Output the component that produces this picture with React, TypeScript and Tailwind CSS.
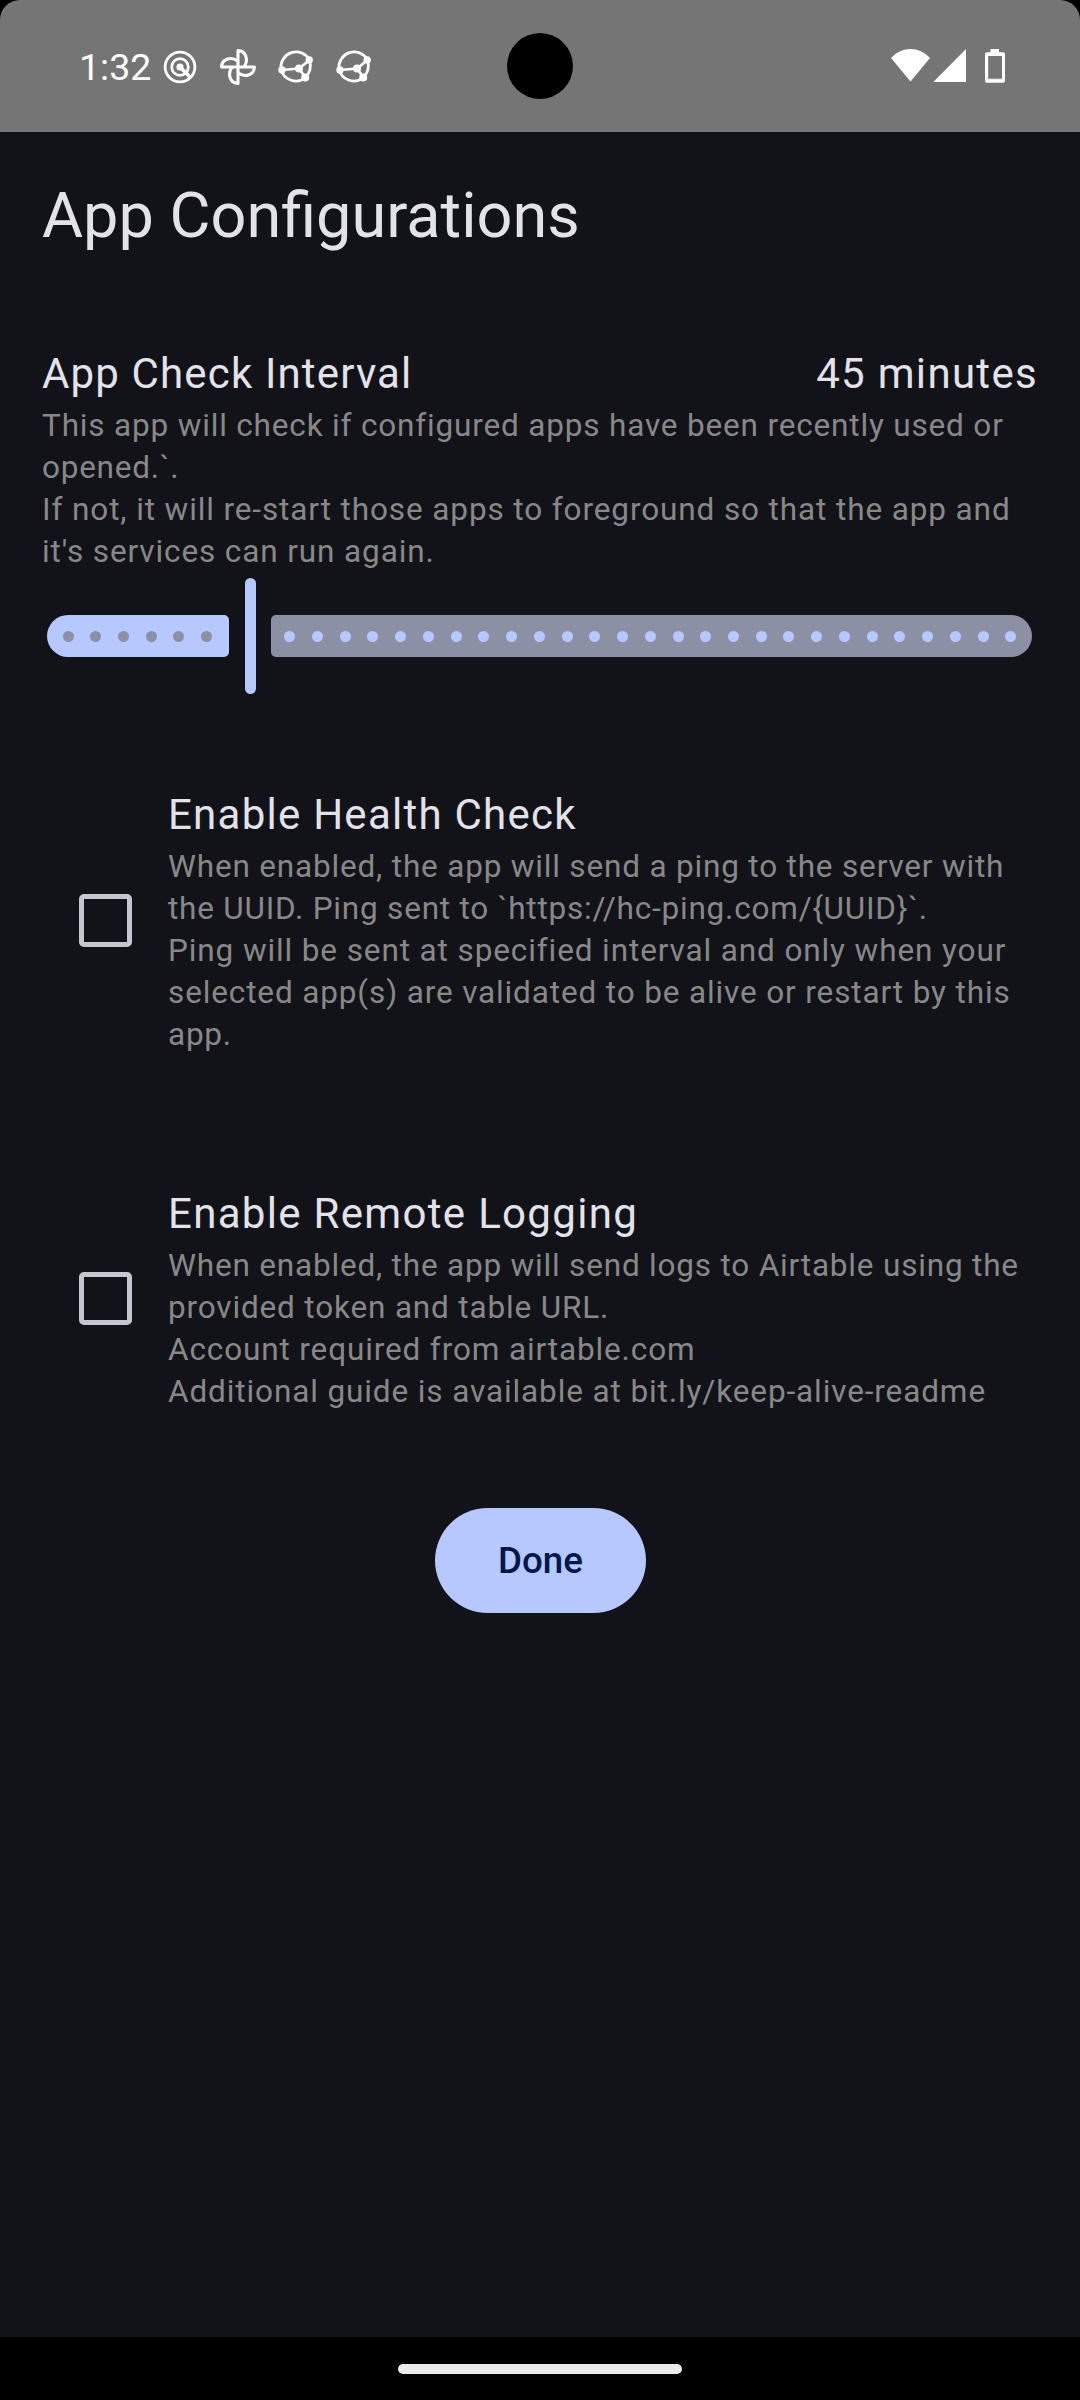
import React from "react";

const ACTIVE_TICKS = Array.from({ length: 6 });
const INACTIVE_TICKS = Array.from({ length: 27 });

type Line = { text: string; tracking: string };

const INTERVAL_LINES: Line[] = [
  { text: "This app will check if configured apps have been recently used or", tracking: "tracking-[0.83px]" },
  { text: "opened.`.", tracking: "tracking-[0.75px]" },
  { text: "If not, it will re-start those apps to foreground so that the app and", tracking: "tracking-[0.89px]" },
  { text: "it's services can run again.", tracking: "tracking-[0.89px]" },
];

const HEALTH_LINES: Line[] = [
  { text: "When enabled, the app will send a ping to the server with", tracking: "tracking-[0.82px]" },
  { text: "the UUID. Ping sent to `https://hc-ping.com/{UUID}`.", tracking: "tracking-[0.79px]" },
  { text: "Ping will be sent at specified interval and only when your", tracking: "tracking-[0.89px]" },
  { text: "selected app(s) are validated to be alive or restart by this", tracking: "tracking-[0.87px]" },
  { text: "app.", tracking: "tracking-[0.75px]" },
];

const LOGGING_LINES: Line[] = [
  { text: "When enabled, the app will send logs to Airtable using the", tracking: "tracking-[0.81px]" },
  { text: "provided token and table URL.", tracking: "tracking-[0.84px]" },
  { text: "Account required from airtable.com", tracking: "tracking-[0.87px]" },
  { text: "Additional guide is available at bit.ly/keep-alive-readme", tracking: "tracking-[0.89px]" },
];

function TargetIcon() {
  return (
    <svg className="h-9 w-9" viewBox="-18 -18 36 36" fill="none" stroke="white">
      <circle r="14.9" strokeWidth="2.8" />
      <circle r="8.3" strokeWidth="2.8" />
      <circle r="3.6" fill="white" stroke="none" />
      <path d="M0 0 L10 10" strokeWidth="3.6" />
    </svg>
  );
}

function PinwheelIcon() {
  return (
    <svg className="h-10 w-10" viewBox="-20 -20 40 40" fill="none" stroke="white" strokeWidth="3.1" strokeLinejoin="round">
      <path d="M0 0 V-16.4 C8.4 -16.2 10.8 -6.5 5.8 0" />
      <path d="M0 0 H16.4 C16.2 8.4 6.5 10.8 0 5.8" />
      <path d="M0 0 V16.4 C-8.4 16.2 -10.8 6.5 -5.8 0" />
      <path d="M0 0 H-16.4 C-16.2 -8.4 -6.5 -10.8 0 -5.8" />
    </svg>
  );
}

function NetworkIcon() {
  return (
    <svg className="h-10 w-10" viewBox="-20 -19.5 40 40" fill="none" stroke="white" strokeWidth="2.7">
      <path d="M13.5 -6.5 A15.2 15.2 0 0 0 -15 2.5 A15.2 15.2 0 0 0 9 11.5" />
      <path d="M13.5 -6 C15.5 0 14 6 9.5 11" />
      <path d="M-14 3.5 L3 2 L13 -6 M3 2 L9.5 11" />
      <g fill="white" stroke="none">
        <circle cx="-14" cy="3.5" r="3.7" />
        <circle cx="3" cy="2" r="4" />
        <circle cx="13.2" cy="-6.5" r="3.7" />
        <circle cx="9.2" cy="11" r="4" />
      </g>
    </svg>
  );
}

function StatusBar() {
  return (
    <div className="h-[132px] shrink-0 bg-black">
      <div className="relative flex h-full items-center rounded-t-[20px] bg-[#757575] pl-[79px] pr-[75px]">
        <span className="w-[83px] pt-px text-[37.5px] leading-[44px] text-white">1:32</span>
        <div className="flex items-center pt-0.5">
          <TargetIcon />
          <div className="ml-5 flex gap-[18px]">
            <PinwheelIcon />
            <NetworkIcon />
            <NetworkIcon />
          </div>
        </div>
        <div className="absolute left-[507px] top-[33px] h-[66px] w-[66px] rounded-full bg-black" />
        <svg className="ml-auto h-[36px] w-[115px]" viewBox="890 48 115 36" fill="white">
          <path d="M891 58 C902 46 919 46 930 58 L910.5 81.5 Z" />
          <path d="M966 49 V82 H933.3 Z" />
          <path fillRule="evenodd" d="M990.5 49 H999 V52.2 H1003 Q1005 52.2 1005 54.5 V80.5 Q1005 82.8 1003 82.8 H987 Q985 82.8 985 80.5 V54.5 Q985 52.2 987 52.2 H990.5 Z M988.2 56 V79 H1002 V56 Z" />
          <path d="M988.2 78.6 H1002 V79.4 H988.2 Z" fill="#f3c8bd" />
        </svg>
      </div>
    </div>
  );
}

function Heading({ children, tracking = "tracking-[1.3125px]" }: { children: React.ReactNode; tracking?: string }) {
  return <h2 className={`whitespace-nowrap text-[42px] leading-[63px] text-[#e3e2e9] ${tracking}`}>{children}</h2>;
}

function Description({ lines }: { lines: Line[] }) {
  return (
    <div className="whitespace-nowrap text-[31.5px] leading-[42px] text-[#888888]">
      {lines.map((line) => (
        <p key={line.text} className={line.tracking}>
          {line.text}
        </p>
      ))}
    </div>
  );
}

function IntervalSlider() {
  return (
    <div className="flex h-[126px] items-center pl-[5px] pr-1.5">
      <div className="flex h-[42px] w-[181.5px] shrink-0 items-center gap-[16.74px] rounded-l-[21px] rounded-r-[5px] bg-[#b6c8ff] pl-[15.5px]">
        {ACTIVE_TICKS.map((_, i) => (
          <span key={i} className="h-[11px] w-[11px] shrink-0 rounded-full bg-[#8b90a5]" />
        ))}
      </div>
      <div className="ml-4 mr-[15.5px] h-[115.5px] w-[11px] shrink-0 rounded-full bg-[#b6c8ff]" />
      <div className="flex h-[42px] flex-1 items-center justify-between rounded-l-[5px] rounded-r-[21px] bg-[#8b90a5] pl-[13.25px] pr-[15.5px]">
        {INACTIVE_TICKS.map((_, i) => (
          <span key={i} className="h-[11px] w-[11px] shrink-0 rounded-full bg-[#b6c8ff]" />
        ))}
      </div>
    </div>
  );
}

function CheckOption({ title, lines, tracking }: { title: string; lines: Line[]; tracking?: string }) {
  return (
    <div className="flex items-center pl-[37px]">
      <button role="checkbox" aria-checked="false" aria-label={title} className="mt-0.5 h-[53px] w-[53px] shrink-0 rounded-[5px] border-[5px] border-[#c6c6d0]" />
      <div className="ml-9">
        <Heading tracking={tracking}>{title}</Heading>
        <Description lines={lines} />
      </div>
    </div>
  );
}

export default function App() {
  return (
    <div className="flex h-[2400px] w-[1080px] flex-col overflow-hidden bg-[#121318] font-[Roboto,sans-serif]">
      <StatusBar />
      <main className="flex flex-1 flex-col px-[42px] pt-[42px]">
        <h1 className="text-[63px] leading-[84px] text-[#e3e2e9]">App Configurations</h1>
        <section className="mt-[84px]">
          <div className="flex justify-between">
            <Heading tracking="tracking-[1.15px]">App Check Interval</Heading>
            <Heading>45 minutes</Heading>
          </div>
          <Description lines={INTERVAL_LINES} />
          <IntervalSlider />
        </section>
        <section className="mt-[84px]">
          <CheckOption title="Enable Health Check" tracking="tracking-[1.25px]" lines={HEALTH_LINES} />
        </section>
        <section className="mt-[126px]">
          <CheckOption title="Enable Remote Logging" lines={LOGGING_LINES} />
        </section>
        <button className="mt-[95px] h-[105px] w-[211px] self-center rounded-full bg-[#b6c8ff] pl-px text-[36.75px] font-medium text-[#00174b]">
          Done
        </button>
      </main>
      <div className="flex h-[63px] shrink-0 items-center justify-center bg-black">
        <div className="h-[10px] w-[284px] rounded-full bg-[#ebebeb]" />
      </div>
    </div>
  );
}
